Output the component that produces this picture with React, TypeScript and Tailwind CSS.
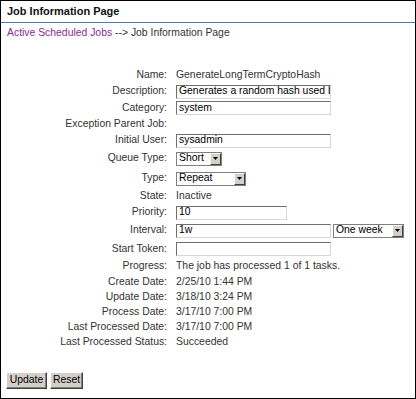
import React from 'react';

type Row = { label: string; h: string; kind: 'text' | 'input' | 'select'; value?: string; w?: string };

const Input: React.FC<{ value: string; w: string }> = ({ value, w }) => (
  <div className={`${w} h-[14px] bg-white border border-t-[#6f6f6f] border-l-[#6f6f6f] border-b-[#d8d8d8] border-r-[#d8d8d8] pl-[2px] flex items-center overflow-hidden whitespace-nowrap text-[10.4px] leading-none text-black`}>
    {value}
  </div>
);

const Select: React.FC<{ value: string; w: string }> = ({ value, w }) => (
  <div className={`${w} h-[14px] bg-white border border-[#7f7f7f] flex items-center justify-between text-[10.4px] leading-none text-black`}>
    <span className="pl-[2px]">{value}</span>
    <span className="w-[11px] h-[12px] bg-[#d4d0c8] border border-t-white border-l-white border-b-[#404040] border-r-[#404040] flex items-center justify-center">
      <svg width="5" height="3" viewBox="0 0 5 3"><path d="M0 0h5L2.5 3z" fill="#000" /></svg>
    </span>
  </div>
);

const rows: Row[] = [
  { label: 'Name:', h: 'h-[16px]', kind: 'text', value: 'GenerateLongTermCryptoHash' },
  { label: 'Description:', h: 'h-[17px]', kind: 'input', value: 'Generates a random hash used by', w: 'w-[155px]' },
  { label: 'Category:', h: 'h-[16px]', kind: 'input', value: 'system', w: 'w-[155px]' },
  { label: 'Exception Parent Job:', h: 'h-[16px]', kind: 'text', value: '' },
  { label: 'Initial User:', h: 'h-[17px]', kind: 'input', value: 'sysadmin', w: 'w-[155px]' },
  { label: 'Queue Type:', h: 'h-[19px]', kind: 'select', value: 'Short', w: 'w-[46px]' },
  { label: 'Type:', h: 'h-[21px]', kind: 'select', value: 'Repeat', w: 'w-[70px]' },
  { label: 'State:', h: 'h-[15px]', kind: 'text', value: 'Inactive' },
  { label: 'Priority:', h: 'h-[17px]', kind: 'input', value: '10', w: 'w-[111px]' },
  { label: 'Interval:', h: 'h-[19px]', kind: 'input', value: '1w', w: 'w-[155px]' },
  { label: 'Start Token:', h: 'h-[18px]', kind: 'input', value: '', w: 'w-[155px]' },
  { label: 'Progress:', h: 'h-[17px]', kind: 'text', value: 'The job has processed 1 of 1 tasks.' },
  { label: 'Create Date:', h: 'h-[15px]', kind: 'text', value: '2/25/10 1:44 PM' },
  { label: 'Update Date:', h: 'h-[15px]', kind: 'text', value: '3/18/10 3:24 PM' },
  { label: 'Process Date:', h: 'h-[15px]', kind: 'text', value: '3/17/10 7:00 PM' },
  { label: 'Last Processed Date:', h: 'h-[15px]', kind: 'text', value: '3/17/10 7:00 PM' },
  { label: 'Last Processed Status:', h: 'h-[15px]', kind: 'text', value: 'Succeeded' },
];

const Button: React.FC<{ label: string; w: string }> = ({ label, w }) => (
  <div className={`${w} h-[17px] bg-[#d4d0c8] border border-t-white border-l-white border-b-[#404040] border-r-[#404040] shadow-[inset_-1px_-1px_0_#808080] flex items-center justify-center text-[10.4px] leading-none text-black`}>
    {label}
  </div>
);

export default function App() {
  return (
    <div className="w-[416px] h-[399px] bg-white border border-black text-[#333] text-[10.4px] leading-none" style={{ fontFamily: '"Liberation Sans", Arial, sans-serif' }}>
      <div className="h-[21px] flex items-center px-[6px] font-bold text-[11px] text-[#111]">Job Information Page</div>
      <div className="h-px bg-[#4a7ab4]" />
      <div className="h-[20px] flex items-center px-[6px]">
        <span className="text-[#8a2a96]">Active Scheduled Jobs</span>
        <span>&nbsp;--&gt; Job Information Page</span>
      </div>
      <div className="mt-[24px] flex flex-col">
        {rows.map((r, idx) => (
          <div key={idx} className={`${r.h} flex items-center`}>
            <div className="w-[166px] shrink-0 text-right whitespace-nowrap">{r.label}</div>
            <div className="pl-[9px] flex items-center gap-[2px]">
              {r.kind === 'text' && <span className="whitespace-nowrap">{r.value}</span>}
              {r.kind === 'input' && <Input value={r.value || ''} w={r.w || ''} />}
              {r.kind === 'select' && <Select value={r.value || ''} w={r.w || ''} />}
              {r.label === 'Interval:' && <Select value="One week" w="w-[71px]" />}
            </div>
          </div>
        ))}
      </div>
      <div className="mt-[22px] px-[5px] flex gap-[3px]">
        <Button label="Update" w="w-[41px]" />
        <Button label="Reset" w="w-[33px]" />
      </div>
    </div>
  );
}
